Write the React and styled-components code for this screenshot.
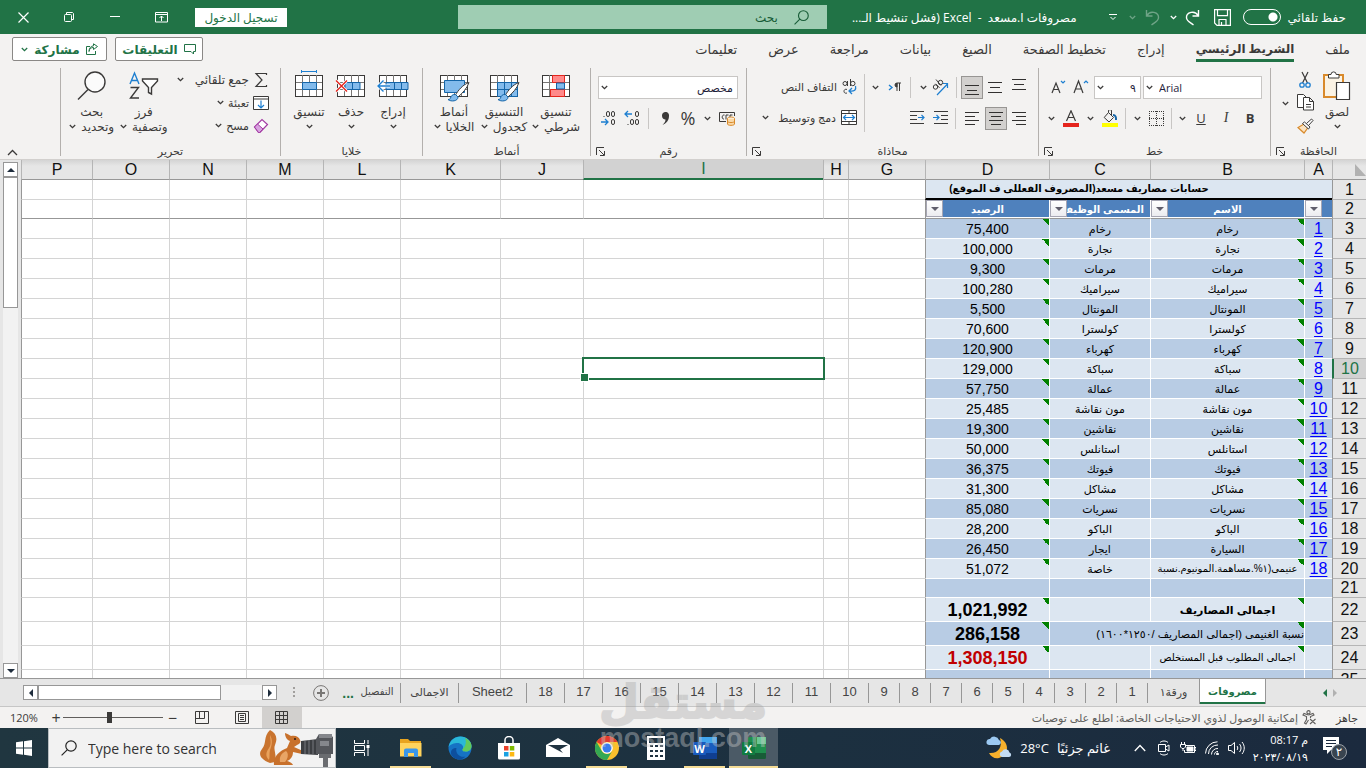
import styled, { createGlobalStyle, css } from "styled-components";

const green = "#217346";
const ink = "#3b3a39";
const blue = "#1e7fd0";
const uiFont = '"Open Sans", "Noto Sans", "DejaVu Sans", sans-serif';
const sheetFont = '"Liberation Sans", "DejaVu Sans", sans-serif';

const GlobalStyle = createGlobalStyle`
  * {
    box-sizing: border-box;
  }

  body {
    margin: 0;
    font-family: ${uiFont};
    font-size: 12px;
    color: ${ink};
  }

  button, input, select {
    font: inherit;
    color: inherit;
    margin: 0;
    padding: 0;
    border: 0;
    background: none;
  }

  svg {
    display: block;
    flex: none;
  }
`;

const Window = styled.div`
  height: 100vh;
  display: flex;
  flex-direction: column;
  overflow: hidden;
  background: #f3f2f1;
`;

/* ---------- title bar ---------- */

const TitleBar = styled.header`
  display: flex;
  align-items: center;
  height: 34px;
  flex: none;
  padding-right: 20px;
  background: ${green};
  color: #fff;
`;

const AutoSave = styled.label`
  display: flex;
  align-items: center;
  gap: 7px;
  white-space: nowrap;
  font-size: 12px;

  input {
    appearance: none;
    width: 38px;
    height: 16px;
    border: 1px solid #fff;
    border-radius: 8px;
    background: radial-gradient(circle at 29px 7px, #fff 4px, transparent 5px);
  }
`;

const TitleButton = styled.button`
  display: flex;
  align-items: center;
  justify-content: center;
  width: ${(p) => p.$w || 20}px;
  height: 30px;
  flex: none;
  opacity: ${(p) => (p.$dim ? 0.35 : 1)};
`;

const DocTitle = styled.div`
  flex: 1;
  min-width: 0;
  margin-right: 24px;
  font-size: 12px;
  white-space: pre;
  overflow: hidden;
`;

const SearchBox = styled.label`
  display: flex;
  align-items: center;
  gap: 16px;
  width: 27vw;
  height: 24px;
  padding: 0 18px;
  background: #9fcdb3;
  color: #185c37;

  input {
    flex: 1;
    min-width: 0;
    outline: 0;
  }

  input::placeholder {
    color: #185c37;
    opacity: 1;
  }
`;

const WindowControls = styled.div`
  display: flex;
  align-items: center;
  justify-content: flex-end;
  flex: none;
  width: 458px;
`;

const SignIn = styled.button`
  width: 92px;
  height: 19px;
  margin-left: 11px;
  background: #fff;
  color: ${green};
  font-size: 12px;
  line-height: 17px;
`;

/* ---------- ribbon ---------- */

const RibbonTabs = styled.nav`
  display: flex;
  align-items: center;
  height: 33px;
  flex: none;
  padding: 0 16px 3px 12px;
`;

const Tab = styled.a`
  height: 26px;
  margin-left: 31px;
  padding-top: 4px;
  line-height: 18px;
  font-size: 13px;
  white-space: nowrap;
  color: ${ink};
  text-decoration: none;

  ${(p) =>
    p.$active &&
    css`
      font-size: 12px;
      font-weight: bold;
      border-bottom: 3px solid ${green};
    `}
`;

const TabActions = styled.div`
  display: flex;
  gap: 8px;
  margin-right: auto;
`;

const OutlineButton = styled.button`
  display: flex;
  align-items: center;
  justify-content: center;
  gap: 6px;
  width: ${(p) => p.$w}px;
  height: 24px;
  border: 1px solid #8a8886;
  border-radius: 2px;
  background: #fff;
  color: ${green};
  font-size: 12px;
  font-weight: bold;
  white-space: nowrap;
`;

const Ribbon = styled.div`
  display: flex;
  height: 93px;
  flex: none;
  padding-top: 1px;
  border-bottom: 1px solid #d2d0ce;
`;

const Group = styled.section`
  display: flex;
  flex-direction: column;
  width: ${(p) => p.$w}px;
  flex: none;
  height: 88px;
  border-left: 1px solid #b3b0ad;
`;

const GroupBody = styled.div`
  display: flex;
  flex: 1;
  padding-right: ${(p) => p.$start || 0}px;
`;

const GroupFooter = styled.div`
  display: grid;
  grid-template-columns: 12px 1fr 12px;
  align-items: center;
  height: 10px;
  padding: 0 2px;
  font-size: 11px;
  line-height: 10px;
  text-align: center;
  white-space: nowrap;

  span {
    grid-column: 2;
  }
`;

const Stack = styled.div`
  display: flex;
  flex-direction: column;
  gap: ${(p) => p.$gap || 0}px;
  padding-top: ${(p) => p.$top || 0}px;
  padding-right: ${(p) => p.$start || 0}px;
`;

const ToolRow = styled.div`
  display: flex;
  align-items: center;
  height: 24px;
`;

const Tool = styled.button`
  display: flex;
  align-items: center;
  justify-content: center;
  flex: none;
  width: ${(p) => p.$w || 24}px;
  height: 23px;
  font-size: ${(p) => p.$size || 14}px;
  line-height: 20px;

  i {
    font-family: "Liberation Serif", serif;
    font-size: 14px;
  }

  ${(p) =>
    p.$on &&
    css`
      border: 1px solid #979593;
      background: #d2d0ce;
    `}
`;

const Divider = styled.span`
  width: ${(p) => p.$w || 8}px;
  height: ${(p) => p.$h || 21}px;
  flex: none;
  background: linear-gradient(#c8c6c4, #c8c6c4) center / 1px 100% no-repeat;
`;

const Combo = styled.div`
  display: flex;
  align-items: center;
  direction: ltr;
  width: ${(p) => p.$w}px;
  height: 23px;
  margin-left: 2px;
  padding-left: 2px;
  border: 1px solid #c8c6c4;
  background: #fff;

  select {
    appearance: none;
    flex: 1;
    min-width: 0;
    height: 21px;
    padding: 0 4px 0 6px;
    direction: ${(p) => p.$dir || "ltr"};
    color: #1f1e3a;
    font-size: 11px;
  }
`;

const BigTool = styled.button`
  display: flex;
  flex-direction: column;
  align-items: center;
  width: ${(p) => p.$w}px;
  flex: none;
  height: 72px;
  padding-top: 2px;
  font-size: 12px;
  line-height: 15px;
  white-space: nowrap;

  > svg {
    margin-bottom: 2px;
  }

  span {
    display: flex;
    align-items: center;
    gap: 5px;
    height: 15px;
  }
`;

const TextTool = styled.button`
  display: flex;
  align-items: center;
  gap: ${(p) => p.$gap || 5}px;
  height: 23px;
  font-size: ${(p) => p.$size || 11}px;
  white-space: nowrap;
`;

const CollapseRibbon = styled.button`
  align-self: flex-end;
  margin: 0 auto 3px 7px;
`;

/* ---------- sheet ---------- */

const SheetArea = styled.main`
  display: flex;
  flex: 1;
  min-height: 0;
  border-bottom: 1px solid #979797;
`;

const GridPane = styled.div`
  flex: 1;
  min-width: 0;
  overflow: hidden;
  background: #fff;
`;

const Grid = styled.table`
  width: 100%;
  table-layout: fixed;
  border-spacing: 0;
  font-family: ${sheetFont};
  color: #000;

  td, th {
    padding: 0;
    overflow: hidden;
    white-space: nowrap;
    text-align: center;
  }
`;

const HeadCell = styled.th`
  height: 20px;
  font-size: 16px;
  font-weight: normal;
  line-height: 18px;
  color: ${(p) => (p.$on ? green : "#111")};
  background: ${(p) =>
    p.$on ? "#d2d2d2" : "linear-gradient(#d4d4d4, #e6e6e6 6px)"};
  border-left: 1px solid #b5b5b5;
  border-bottom: ${(p) => (p.$on ? `2px solid ${green}` : "1px solid #979797")};
`;

const RowHead = styled.th`
  font-size: 16px;
  font-weight: normal;
  line-height: 18px;
  color: ${(p) => (p.$on ? green : "#111")};
  background: ${(p) => (p.$on ? "#d2d2d2" : "#e6e6e6")};
  border-left: ${(p) => (p.$on ? `2px solid ${green}` : "1px solid #979797")};
  border-bottom: 1px solid #b5b5b5;
`;

const Row = styled.tr`
  height: ${(p) => p.$h}px;

  > td {
    border-bottom: 1px solid ${(p) => (p.$freeze ? "#979797" : "#d4d4d4")};
  }
`;

const EmptyCell = styled.td`
  border-left: 1px solid ${(p) => (p.$edge ? "#979797" : "#d4d4d4")};
`;

const SelectedCell = styled(EmptyCell)`
  && {
    position: relative;
    overflow: visible;
  }

  &::before {
    content: "";
    position: absolute;
    inset: -2px;
    border: 2px solid ${green};
  }

  &::after {
    content: "";
    position: absolute;
    left: -4px;
    bottom: -4px;
    width: 7px;
    height: 7px;
    border: 1px solid #fff;
    background: ${green};
  }
`;

const flag =
  "linear-gradient(to bottom left, #008000 50%, transparent 50%) top right / 7px 7px no-repeat";

const DataCell = styled.td`
  && {
    height: ${(p) => p.$h || 20}px;
    background: ${(p) => (p.$flag ? flag + ", " : "")}
      ${(p) => (p.$dark ? "#b8cce4" : "#dce6f1")};
    border-bottom-color: #fff;
    border-left: 1px solid ${(p) => (p.$edge ? "#979797" : "#fff")};
    font-size: ${(p) => p.$size || 11}px;
    font-weight: ${(p) => (p.$bold ? "bold" : "normal")};
    line-height: 18px;
    text-align: ${(p) => p.$align || "center"};
    color: ${(p) => p.$color || "#000"};
  }

  a {
    color: #0000ff;
    text-underline-offset: 2px;
  }
`;

const SheetTitle = styled.td`
  && {
    padding-right: 100px;
    background: #dce6f1;
    border-left: 1px solid #979797;
    border-bottom: 2px solid #000;
    font-size: 10px;
    font-weight: bold;
    line-height: 16px;
  }
`;

const FilterHead = styled.td`
  && {
    position: relative;
    background: #4f81bd;
    border-left: 1px solid ${(p) => (p.$edge ? "#979797" : "#fff")};
    box-shadow: inset 0 -1px #fff;
    color: #fff;
    font-size: 10px;
    font-weight: bold;
    line-height: 17px;
  }

  button {
    position: absolute;
    left: 0;
    bottom: 1px;
    display: flex;
    align-items: center;
    justify-content: center;
    width: 17px;
    height: 17px;
    border: 1px solid #a6a6b4;
    background: linear-gradient(#fff, #ececf0);
  }
`;

const VerticalBar = styled.div`
  display: flex;
  flex-direction: column;
  width: 21px;
  flex: none;
  padding: 2px 3px 0;
  background: #e6e6e6;
`;

const ScrollButton = styled.button`
  display: flex;
  align-items: center;
  justify-content: center;
  width: 15px;
  height: 15px;
  flex: none;
  border: 1px solid #979797;
  background: #fff;
`;

const ScrollThumb = styled.div`
  width: ${(p) => p.$w || 15}px;
  height: ${(p) => p.$h || 15}px;
  border: 1px solid #979797;
  background: #fff;
`;

const ScrollTrack = styled.div`
  flex: 1;
  background: #f2f2f2;
`;

/* ---------- sheet tabs ---------- */

const SheetTabs = styled.nav`
  display: flex;
  align-items: center;
  height: 28px;
  flex: none;
  background: #e6e6e6;
  border-bottom: 1px solid #c6c6c6;
  font-family: ${sheetFont};
`;

const TabArrows = styled.div`
  display: flex;
  justify-content: space-between;
  width: 100px;
  padding: 0 27px 0 55px;
`;

const SheetTab = styled.a`
  width: ${(p) => p.$w}px;
  flex: none;
  height: 20px;
  border-left: 1px solid #979797;
  color: #444;
  font-size: ${(p) => p.$size || 13}px;
  line-height: 18px;
  text-align: center;
  text-decoration: none;
  overflow: hidden;
  white-space: nowrap;

  ${(p) =>
    p.$active &&
    css`
      height: 25px;
      align-self: flex-start;
      padding-top: 4px;
      border: solid #979797;
      border-width: 0 1px;
      box-shadow: inset 0 -2px ${green};
      background: #fff;
      color: ${green};
      font-weight: bold;
    `}

  ${(p) =>
    p.$last &&
    css`
      border-left: 0;
    `}
`;

const MoreTabs = styled.button`
  width: 10px;
  height: 20px;
  color: ${green};
  font-size: 14px;
  font-weight: bold;
  line-height: 14px;
`;

const TabsEnd = styled.div`
  display: flex;
  align-items: center;
  gap: 18px;
  margin-right: auto;
`;

const HorizontalBar = styled.div`
  display: flex;
  direction: ltr;
  width: 254px;
  margin: 0 -2px 0 23px;
`;

/* ---------- status bar ---------- */

const StatusBar = styled.footer`
  display: flex;
  align-items: center;
  height: 21px;
  flex: none;
  padding: 0 8px 0 10px;
  font-size: 11px;
  white-space: nowrap;
`;

const StatusText = styled.button`
  display: flex;
  align-items: center;
  gap: 4px;
  margin-right: 19px;
  color: #605e5c;
  font-size: 11px;
`;

const StatusTools = styled.div`
  display: flex;
  align-items: center;
  margin-right: auto;
`;

const ViewButton = styled.button`
  display: flex;
  align-items: center;
  justify-content: center;
  width: 40px;
  height: 21px;
  background: ${(p) => (p.$on ? "#d2d0ce" : "none")};
`;

const ZoomButton = styled.button`
  width: ${(p) => p.$w}px;
  font-size: 16px;
  line-height: 18px;
`;

const ZoomSlider = styled.input`
  appearance: none;
  width: 100px;
  height: 14px;
  background: linear-gradient(#605e5c, #605e5c) center / 100% 1px no-repeat;

  &::-webkit-slider-thumb {
    appearance: none;
    width: 5px;
    height: 11px;
    background: ${ink};
  }
`;

const ZoomValue = styled.span`
  width: 39px;
  text-align: left;
  direction: ltr;
  font-size: 11px;
`;

/* ---------- taskbar ---------- */

const Taskbar = styled.footer`
  display: flex;
  direction: ltr;
  height: 40px;
  flex: none;
  background: linear-gradient(90deg, #203640, #1c3040 60%, #1b2a3e);
  color: #fff;
`;

const TaskButton = styled.button`
  position: relative;
  display: flex;
  align-items: center;
  justify-content: center;
  width: ${(p) => p.$w || 49}px;
  flex: none;
  background: ${(p) => (p.$on ? "#4b5a66" : "none")};

  ${(p) =>
    p.$open &&
    css`
      &::after {
        content: "";
        position: absolute;
        bottom: 0;
        left: ${p.$on ? 0 : 4}px;
        right: ${p.$on ? 0 : 4}px;
        height: 2px;
        background: #f5dc95;
      }
    `}
`;

const TaskSearch = styled.label`
  display: flex;
  align-items: center;
  gap: 11px;
  width: 288px;
  flex: none;
  padding-left: 12px;
  border: 1px solid #b9bdc0;
  background: #f2f2f2;
  color: #222;

  input {
    flex: 1;
    min-width: 0;
    font-size: 14px;
    outline: 0;
  }

  input::placeholder {
    color: #333;
    opacity: 1;
  }
`;

const TaskButtons = styled.div`
  display: flex;
  padding-left: 1px;
`;

const Tray = styled.div`
  display: flex;
  align-items: center;
  margin-left: auto;
  padding-right: 4px;
`;

const Weather = styled.button`
  display: flex;
  align-items: center;
  gap: 8px;
  margin-right: 18px;
  font-size: 13px;
  white-space: nowrap;
`;

const Clock = styled.time`
  width: 60px;
  font-size: 11px;
  line-height: 17px;
  text-align: right;
  white-space: nowrap;
`;

const TrayButton = styled.button`
  display: flex;
  align-items: center;
  justify-content: center;
  width: ${(p) => p.$w || 24}px;
  height: 40px;
`;

const Watermark = styled.div`
  position: absolute;
  left: 50%;
  bottom: 16px;
  width: 180px;
  margin-left: -90px;
  direction: ltr;
  text-align: center;
  font-weight: bold;
  pointer-events: none;

  p {
    margin: 0 0 -6px;
    font-family: "DejaVu Sans", sans-serif;
    font-size: 46px;
    line-height: 56px;
    color: #a0a0a0;
    -webkit-text-stroke: 2px #a0a0a0;
    opacity: 0.34;
  }

  small {
    display: block;
    font-family: ${sheetFont};
    font-size: 27px;
    line-height: 28px;
    color: rgba(200, 200, 200, 0.42);
  }
`;

/* ---------- icons ---------- */

const Chevron = ({ color = ink }) => (
  <svg width="7" height="5" viewBox="0 0 7 5" fill="none" stroke={color} strokeWidth="1.3">
    <path d="M.8 1l2.7 2.6L6.2 1" />
  </svg>
);

const Magnifier = ({ size = 15 }) => (
  <svg width={size} height={size} viewBox="0 0 16 16" fill="none" stroke="currentColor" strokeWidth="1.2">
    <circle cx="10" cy="6" r="5.2" />
    <path d="M6.2 9.8L.6 15.4" />
  </svg>
);

const Launcher = () => (
  <svg width="9" height="9" viewBox="0 0 9 9" fill="none" stroke={ink}>
    <path d="M.5 8V.5H8M3 3l5 5M8.5 4v4.5H4" />
  </svg>
);

const Triangle = ({ dir, color = "#1f2d3d" }) => {
  const paths = {
    up: "M0 6l4-4 4 4z",
    down: "M0 2h8L4 6z",
    left: "M6 0v8L2 4z",
    right: "M2 0v8l4-4z",
  };
  return (
    <svg width="8" height="8" viewBox="0 0 8 8" fill={color}>
      <path d={paths[dir]} />
    </svg>
  );
};

const Lines = ({ rows }) => (
  <svg width="16" height="18" viewBox="0 0 16 18" stroke="#323130">
    {rows.map(([x1, x2, y]) => (
      <path key={y} d={`M${x1} ${y + 0.5}H${x2}`} />
    ))}
  </svg>
);

const GridIcon = ({ children }) => (
  <svg width="32" height="32" viewBox="0 0 32 32" fill="none" stroke={ink}>
    <rect x="2.5" y="5.5" width="27" height="21" fill="#fff" />
    <path d="M9.5 5v21M16.5 5v21M23.5 5v21M3 12.5h26M3 19.5h26" stroke="#797775" />
    {children}
  </svg>
);

const Brush = () => (
  <g strokeLinejoin="round">
    <path d="M31 12.5c-6 2-11 8-13.500 12.500l2.500 2c4.500-4 9-8.500 11-14.500z" fill="#fff" />
    <path d="M17.500 24.500c-3-.5-4.500 1.500-5 3.500-.3 1-1 1.500-2.500 1.500 3 2.500 10 1.800 10-2.500z" fill="#83bbec" stroke="#1465a8" />
  </g>
);

const PasteIcon = () => (
  <svg width="30" height="32" viewBox="0 0 30 32" fill="none">
    <path d="M2 5h19v22H2z" fill="#fbf3e4" stroke="#d98a2b" strokeWidth="2" />
    <path d="M6.5 8V4.500H9a2.600 2.600 0 0 1 5.200 0h2.800V8z" fill="#fff" stroke={ink} />
    <path d="M14.500 12.500h13v17h-13z" fill="#fff" stroke={ink} strokeWidth="1.2" />
  </svg>
);

const CutIcon = () => (
  <svg width="14" height="18" viewBox="0 0 14 18" fill="none">
    <path d="M4 1l5.500 11M10 1L4.500 12" stroke={ink} strokeWidth="1.2" />
    <circle cx="4" cy="14" r="2.2" stroke={blue} strokeWidth="1.3" />
    <circle cx="10" cy="14" r="2.2" stroke={blue} strokeWidth="1.3" />
  </svg>
);

const CopyIcon = () => (
  <svg width="17" height="17" viewBox="0 0 17 17" fill="#fff" stroke={ink}>
    <path d="M7 13.500H.5V.5h6l3 3" />
    <path d="M6.500 3.500h6l4 4v8.500h-10zM12.500 3.500v4h4M9 10.500h5M9 13h5" />
  </svg>
);

const PainterIcon = () => (
  <svg width="17" height="16" viewBox="0 0 17 16" fill="none">
    <path d="M7 6L1 9.500l6 5.500 4-5.500z" fill="#fbe3c0" stroke="#d98a2b" strokeWidth="1.2" />
    <path d="M5.500 5.500l2-1.500 5.500 5-1.500 2zM9.500 5.500L14.500 1l1.500 1.500-4.500 5" fill="#fff" stroke={ink} />
  </svg>
);

const BordersIcon = () => (
  <svg width="15" height="15" viewBox="0 0 15 15" fill="none" stroke={ink} strokeDasharray="1 1">
    <path d="M0 .5h15M0 7.500h15M0 14.500h15M.5 0v15M7.500 0v15M14.500 0v15" />
  </svg>
);

const FillIcon = () => (
  <svg width="16" height="17" viewBox="0 0 16 17" fill="none">
    <path d="M6.500 2.500l5 5-4.500 4.500-4.800-4.500zM6.500 2.500V1a1.500 1.500 0 0 1 3 0v4" stroke={ink} />
    <path d="M11 5c2.500 0 3.200 2 3 5" stroke="#1465a8" strokeWidth="2" />
    <path d="M0 13h16v4H0z" fill="#ffff00" />
  </svg>
);

const FontColorIcon = () => (
  <svg width="16" height="17" viewBox="0 0 16 17" fill="none">
    <path d="M3.500 11L8 .8 12.500 11M5 7.500h6" stroke={ink} strokeWidth="1.2" />
    <path d="M0 13h16v4H0z" fill="#e5251d" />
  </svg>
);

const GrowFont = ({ small }) => (
  <svg width="16" height="16" viewBox="0 0 16 16" fill="none">
    <path d={small ? "M1 14L5 4l4 10M2.500 10.500h5" : "M1 14L5.500 2l4.500 12M2.500 10h6"} stroke={ink} strokeWidth="1.2" />
    <path d={small ? "M10 2l2 2 2-2" : "M11 4l2-2 2 2"} stroke={blue} strokeWidth="1.2" />
  </svg>
);

const OrientationIcon = () => (
  <svg width="18" height="18" viewBox="0 0 18 18" fill="none">
    <g stroke={ink}>
      <circle cx="4.500" cy="9" r="2.2" />
      <path d="M4.500 5.800l4 4" />
      <path d="M5 1.500l5 6" />
      <circle cx="9.500" cy="4.500" r="2.2" />
    </g>
    <path d="M6 17L16.500 6M12 5.500h4.500V10" stroke={blue} strokeWidth="1.2" />
  </svg>
);

const ParagraphIcon = () => (
  <svg width="13" height="11" viewBox="0 0 13 11" fill="none">
    <path d="M1 3l3 2.500L1 8" stroke={blue} strokeWidth="1.4" />
    <path d="M9 9V1h4M11.500 1v8" stroke={ink} />
    <path d="M9 1a2 2 0 0 0 0 4z" fill={ink} stroke={ink} />
  </svg>
);

const IndentIcon = ({ flip }) => (
  <svg width="15" height="14" viewBox="0 0 15 14" fill="none">
    <path d={flip ? "M0 .5h14M0 4.500h7M0 8.500h7M0 12.500h14" : "M1 .5h14M8 4.500h7M8 8.500h7M1 12.500h14"} stroke={ink} />
    <path d={flip ? "M8 6.500h6M11.500 4L14 6.500 11.500 9" : "M0 6.500h6M3.500 4L6 6.500 3.500 9"} stroke={blue} strokeWidth="1.2" />
  </svg>
);

const WrapIcon = () => (
  <svg width="15" height="17" viewBox="0 0 15 17" fill="none">
    <g stroke={ink}>
      <circle cx="3" cy="5.500" r="2" />
      <path d="M5.500 3v5M8.500 1v7" />
      <circle cx="10.800" cy="5.500" r="2.2" />
      <path d="M5 11.500c-4-1.500-4 5 0 3.500" />
    </g>
    <path d="M13.500 8c1 4-1 5.500-6 5M10 10l-3 3 3 3" stroke={blue} strokeWidth="1.3" />
  </svg>
);

const MergeIcon = () => (
  <svg width="16" height="15" viewBox="0 0 16 15" fill="none">
    <path d="M.5.5h15v14H.5zM8 .5v3M8 11.500v3M.5 3.500h15M.5 11.500h15" fill="#fff" stroke={ink} />
    <path d="M2.500 7.500h11M5 5L2.500 7.500 5 10M11 5l2.500 2.500L11 10" stroke={blue} strokeWidth="1.2" />
  </svg>
);

const CurrencyIcon = () => (
  <svg width="17" height="15" viewBox="0 0 17 15" fill="none">
    <path d="M7 10.500H.5V1.500h15V5M5.500 4c-3-.5-3 4.500-.5 4M7 8.500V4h2.500M11 6V4h2.500" stroke={ink} />
    <ellipse cx="12" cy="7.500" rx="3.5" ry="1.5" fill="#fff" stroke="#d98a2b" />
    <path d="M8.500 7.500v5.500c0 1.800 7 1.800 7 0V7.500M8.500 10.300c0 1.700 7 1.700 7 0" fill="#f9d9a8" stroke="#d98a2b" />
  </svg>
);

const Zero = ({ x, y }) => <rect x={x} y={y} width="3" height="5" rx="1.5" stroke={ink} fill="none" />;

const DecimalIcon = ({ less }) => (
  <svg width="17" height="17" viewBox="0 0 17 17" fill="none">
    {less ? (
      <>
        <path d="M1 4h7M4 1L1 4l3 3" stroke={blue} strokeWidth="1.3" />
        <Zero x="11.5" y="1.5" />
        <Zero x="6.5" y="9.5" />
        <Zero x="11.5" y="9.5" />
        <path d="M3.500 14h1v1h-1z" fill={ink} />
      </>
    ) : (
      <>
        <Zero x="6.5" y="1.5" />
        <Zero x="11.5" y="1.5" />
        <path d="M3.500 6h1v1h-1z" fill={ink} />
        <path d="M1 12h7M5 9l3 3-3 3" stroke={blue} strokeWidth="1.3" />
        <Zero x="11.5" y="9.5" />
      </>
    )}
  </svg>
);

const SumIcon = () => (
  <svg width="16" height="16" viewBox="0 0 16 16" fill="none" stroke={ink} strokeWidth="1.2">
    <path d="M13.500 3V1.500H3L9 8l-6 6.500h10.500V13" />
  </svg>
);

const FillDownIcon = () => (
  <svg width="16" height="14" viewBox="0 0 16 14" fill="none">
    <path d="M.5.5h15v13H.5zM.5 3h15" fill="#fff" stroke={ink} />
    <path d="M8 4.500V12M5 9l3 3 3-3" stroke={blue} strokeWidth="1.2" />
  </svg>
);

const EraserIcon = () => (
  <svg width="16" height="16" viewBox="0 0 16 16">
    <path d="M1.500 9L9 1.500l5.500 5L7 14.500H5.500z" fill="#fff" stroke="#a33ba3" strokeWidth="1.2" />
    <path d="M1.500 9l3-3 5.500 5-3.500 3.500h-1z" fill="#d8a3e0" stroke="#a33ba3" />
  </svg>
);

const SortIcon = () => (
  <svg width="30" height="32" viewBox="0 0 30 32" fill="none" strokeWidth="1.4">
    <path d="M1 14L5.500 3 10 14M2.500 10.500h6" stroke={blue} />
    <path d="M1.500 17.500h8l-8 10.500h8.500" stroke={ink} />
    <path d="M13.500 9h15v2l-6 6.500v6.500l-3-1.500v-5l-6-6.500z" fill="#fff" stroke={ink} />
  </svg>
);

const FindIcon = () => (
  <svg width="32" height="32" viewBox="0 0 32 32" fill="#fbfbfb" stroke={ink} strokeWidth="1.4">
    <circle cx="19" cy="12" r="10" />
    <path d="M12 19.500L2 29.500" />
  </svg>
);

const StoreIcon = () => (
  <svg width="24" height="24" viewBox="0 0 24 24">
    <path d="M8 7V4a4 3.500 0 0 1 8 0v3" fill="none" stroke="#fff" strokeWidth="1.5" />
    <path d="M1 7h22v15a1.500 1.500 0 0 1-1.500 1.500h-19A1.500 1.500 0 0 1 1 22z" fill="#fff" />
    <path d="M7 10h4.500v4.500H7z" fill="#e8402a" />
    <path d="M12.800 10h4.500v4.500h-4.500z" fill="#7fba00" />
    <path d="M7 16h4.500v4.500H7z" fill="#1ba1e2" />
    <path d="M12.800 16h4.500v4.500h-4.500z" fill="#fdb813" />
  </svg>
);

const ChromeIcon = () => (
  <svg width="24" height="24" viewBox="0 0 24 24">
    <circle cx="12" cy="12" r="12" fill="#fbc02d" />
    <path d="M1.600 6A12 12 0 0 1 22.400 6H12a6 6 0 0 0-5.200 3z" fill="#e33b2e" />
    <path d="M1.600 6A12 12 0 0 0 12 24l5.200-9a6 6 0 0 1-10.400 0z" fill="#34a853" />
    <circle cx="12" cy="12" r="5.8" fill="#fff" />
    <circle cx="12" cy="12" r="4.5" fill="#3b7ded" />
  </svg>
);

const EdgeIcon = () => (
  <svg width="24" height="24" viewBox="0 0 24 24">
    <circle cx="12" cy="12" r="11.5" fill="#1673c4" />
    <path d="M.6 11C2 4 7 .5 12.500.5 19 .5 23.500 5.500 23.500 10c0 3-2 5.500-5.500 5.500-2.500 0-4.500-.8-3-3C16 9 12 6.500 8.500 7 4.500 7.500 1.500 9 .6 11z" fill="#2ab8d8" />
    <path d="M17 2c4.500 2 6.500 5 6.500 8 0 3-2 5.500-5.500 5.500-2.500 0-4.500-.8-3-3C18 10 18.500 5 17 2z" fill="#63c95c" />
    <path d="M8.500 12c-1.500 5 3 10 9 8.500-3 3.500-9 4-12.500.5-4-4-2-9 3.500-9z" fill="#0d4f9e" />
  </svg>
);

const OfficeIcon = ({ word }) => (
  <svg width="26" height="24" viewBox="0 0 26 24">
    <rect x="7" y="1" width="18" height="22" rx="1.5" fill={word ? "#1a5dbe" : "#1f8f4e"} />
    <path d={word ? "M7 1h18v6H7z" : "M16 1h9v7h-9z"} fill={word ? "#41a5ee" : "#6bc794"} />
    <path d="M7 17h18v4.500a1.500 1.500 0 0 1-1.500 1.500h-15A1.500 1.500 0 0 1 7 21.500z" fill={word ? "#103f91" : "#185c37"} />
    <rect x="1" y="6" width="13" height="13" rx="1" fill={word ? "#185abd" : "#107c41"} />
    <text x="7.5" y="16.5" textAnchor="middle" fontSize="11" fontWeight="bold" fill="#fff" fontFamily="Open Sans, sans-serif">
      {word ? "W" : "X"}
    </text>
  </svg>
);

const ExplorerIcon = () => (
  <svg width="22" height="20" viewBox="0 0 22 20">
    <path d="M0 1h8l2 2h11v4H0z" fill="#e8a41f" />
    <path d="M0 5h21.500v13.500H0z" fill="#ffd35c" />
    <path d="M4 19v-6.500a2 2 0 0 1 2-2h10a2 2 0 0 1 2 2V19h-4v-4H8v4z" fill="#3a96e8" />
  </svg>
);

const CalculatorIcon = () => (
  <svg width="18" height="24" viewBox="0 0 18 24">
    <path d="M0 0h18v24H0z" fill="#fff" />
    <path d="M2 2h14v5H2z" fill="#203341" />
    {[10, 15, 20].map((y) =>
      [3, 8, 13].map((x) => <rect key={`${x}-${y}`} x={x} y={y - 1} width="3" height="2" fill="#203341" />)
    )}
  </svg>
);

const SquirrelIcon = () => (
  <svg width="76" height="38" viewBox="0 0 76 38">
    <path d="M11 34C1 30-1 25 3 20 8 14 4 8 11 1c6 3 8 8 5 15-2 5 2 9 0 17z" fill="#c9742f" />
    <path d="M10 31c-4-4-3-8 0-12s1-9 1-13c3 5 2 10 0 15-1 4 0 7-1 10z" fill="#e9a25c" />
    <path d="M15 36c-1-8 5-14 13-17l3-7c-3-1-5-4-5-8 3 1 4 2 6 3 5-1 8 1 9 4 1 2 0 4-3 5l-3 2 9 4-1 3-9-2c0 5-3 8-6 9 3 1 5 2 6 4z" fill="#c8712c" />
    <path d="M21 33c-1-6 2-9 6-11 3 2 2 8-1 11z" fill="#e8a566" />
    <circle cx="36" cy="10" r="1" fill="#2b1a10" />
    <path d="M42 12l17-2v16l-17-1z" fill="#3c3e42" />
    <path d="M46 12v13M50 11v14M54 11v14" stroke="#77797e" />
    <path d="M57 10l3-5h10l4 3v17H57z" fill="#55575c" />
    <path d="M60 5h13v4H60zM61 12h9v5h-9z" fill="#85878c" />
    <path d="M60 25h12v4H60zM64 29h5v9h-5z" fill="#6a6c70" />
  </svg>
);

const WeatherIcon = () => (
  <svg width="26" height="24" viewBox="0 0 26 24">
    <path d="M14 2c10 5 9 17-1 20-4 1-8-1-10-5 9 1 14-6 11-15z" fill="#f6b02c" />
    <path d="M3 9a3 3 0 0 1 1-6 5 5 0 0 1 9 1 2.600 2.600 0 0 1 0 5z" fill="#9cc9f2" />
    <path d="M16 21a2.800 2.800 0 0 1 0-5.500 4 4 0 0 1 7.500 1 2.300 2.300 0 0 1-.5 4.500z" fill="#c3dcf5" />
  </svg>
);

/* ---------- data ---------- */

const ribbonTabs = ["إدراج", "تخطيط الصفحة", "الصيغ", "بيانات", "مراجعة", "عرض", "تعليمات"];

const columns = [
  ["A", 28],
  ["B", 154],
  ["C", 101],
  ["D", 124],
  ["G", 77],
  ["H", 25],
  ["I", 240],
  ["J", 83],
  ["K", 100],
  ["L", 77],
  ["M", 77],
  ["N", 77],
  ["O", 77],
  ["P"],
];

const emptyColumns = columns.slice(4).map(([name]) => name);

const expenses = [
  ["رخام", "رخام", "75,400"],
  ["نجارة", "نجارة", "100,000"],
  ["مرمات", "مرمات", "9,300"],
  ["سيراميك", "سيراميك", "100,280"],
  ["المونتال", "المونتال", "5,500"],
  ["كولسترا", "كولسترا", "70,600"],
  ["كهرباء", "كهرباء", "120,900"],
  ["سباكة", "سباكة", "129,000"],
  ["عمالة", "عمالة", "57,750"],
  ["مون نقاشة", "مون نقاشة", "25,485"],
  ["نقاشين", "نقاشين", "19,300"],
  ["استانلس", "استانلس", "50,000"],
  ["فيوتك", "فيوتك", "36,375"],
  ["مشاكل", "مشاكل", "31,300"],
  ["نسريات", "نسريات", "85,080"],
  ["الباكو", "الباكو", "28,200"],
  ["السيارة", "ايجار", "26,450"],
  ["عنيمى(١%.مساهمة.المونيوم.نسبة", "خاصة", "51,072"],
];

const sheetTabs = [
  ...[1, 2, 3, 4, 5, 6, 7, 8, 9].map((n) => [n, 31]),
  ...[10, 11, 12, 13, 14, 15, 16, 17, 18].map((n) => [n, 38]),
  ["Sheet2", 68],
];

/* ---------- parts ---------- */

const RibbonGroup = ({ name, width, start, launcher, children }) => (
  <Group $w={width} aria-label={name}>
    <GroupBody $start={start}>{children}</GroupBody>
    <GroupFooter>
      <span>{name}</span>
      {launcher && <Launcher />}
    </GroupFooter>
  </Group>
);

const DropTool = ({ w, label }) => (
  <Tool $w={w} aria-label={label}>
    <Chevron />
  </Tool>
);

const Big = ({ width, icon, first, second }) => (
  <BigTool $w={width}>
    {icon}
    <span>{first}</span>
    <span>
      {second}
      <Chevron />
    </span>
  </BigTool>
);

const EmptyCells = ({ row }) =>
  emptyColumns.map((name) => {
    // K3:H3 is one merged cell
    if (row === 3 && ["I", "J", "K"].includes(name)) return null;
    if (row === 3 && name === "H") return <EmptyCell key={name} colSpan={4} />;
    if (row === 10 && name === "I") return <SelectedCell key={name} />;
    return <EmptyCell key={name} $edge={name === "P"} />;
  });

const Title = () => (
  <TitleBar>
    <AutoSave>
      حفظ تلقائي
      <input type="checkbox" />
    </AutoSave>
    <TitleButton $w={40} aria-label="حفظ">
      <svg width="17" height="17" viewBox="0 0 17 17" fill="none" stroke="#fff" strokeWidth="1.2">
        <path d="M.6.6h15.800v15.800H3L.6 14zM3.500.6v6h10v-6M5 16v-5.500h7V16M7.500 13v3" />
      </svg>
    </TitleButton>
    <TitleButton aria-label="إعادة">
      <svg width="15" height="17" viewBox="0 0 15 17" fill="none" stroke="#fff" strokeWidth="1.4">
        <path d="M13.500 1v6h-6M13 6.500C10 1 1 3 1.500 9c.3 3 3 4 7 7" />
      </svg>
    </TitleButton>
    <TitleButton $w={18} aria-label="خيارات الإعادة">
      <Chevron color="#fff" />
    </TitleButton>
    <TitleButton $w={24} $dim aria-label="تراجع">
      <svg width="15" height="17" viewBox="0 0 15 17" fill="none" stroke="#fff" strokeWidth="1.4">
        <path d="M1.500 1v6h6M2 6.500C5 1 14 3 13.500 9c-.3 3-3 4-7 7" />
      </svg>
    </TitleButton>
    <TitleButton $w={16} $dim aria-label="خيارات التراجع">
      <Chevron color="#fff" />
    </TitleButton>
    <TitleButton $w={24} aria-label="تخصيص">
      <svg width="8" height="8" viewBox="0 0 8 8" fill="none" stroke="#fff">
        <path d="M0 1.500h8M1.500 4L4 6.500 6.500 4" />
      </svg>
    </TitleButton>
    <DocTitle>مصروفات ا.مسعد {" - "} Excel (فشل تنشيط الـ...</DocTitle>
    <SearchBox>
      <Magnifier />
      <input type="search" placeholder="بحث" aria-label="بحث" />
    </SearchBox>
    <WindowControls>
      <SignIn>تسجيل الدخول</SignIn>
      <TitleButton $w={46} aria-label="خيارات عرض الشريط">
        <svg width="13" height="11" viewBox="0 0 13 11" fill="none" stroke="#fff">
          <path d="M.5.5h12v9.500H.5zM.5 2.500h12M6.500 9V4M4.500 6l2-2 2 2" />
        </svg>
      </TitleButton>
      <TitleButton $w={46} aria-label="تصغير">
        <svg width="10" height="2" stroke="#fff">
          <path d="M0 .5h10" />
        </svg>
      </TitleButton>
      <TitleButton $w={46} aria-label="استعادة">
        <svg width="10" height="10" viewBox="0 0 10 10" fill="none" stroke="#fff">
          <rect x=".5" y="2.5" width="7" height="7" rx="1" />
          <path d="M2.500 2.500v-2h6l1 1v6h-2" />
        </svg>
      </TitleButton>
      <TitleButton $w={46} aria-label="إغلاق">
        <svg width="11" height="11" viewBox="0 0 11 11" stroke="#fff" strokeWidth="1.2">
          <path d="M.5.5l10 10M10.500.5l-10 10" />
        </svg>
      </TitleButton>
    </WindowControls>
  </TitleBar>
);

const Tabs = () => (
  <RibbonTabs>
    <Tab href="#">ملف</Tab>
    <Tab href="#" $active>
      الشريط الرئيسي
    </Tab>
    {ribbonTabs.map((name) => (
      <Tab key={name} href="#">
        {name}
      </Tab>
    ))}
    <TabActions>
      <OutlineButton $w={88}>
        <svg width="12" height="11" viewBox="0 0 12 11" fill="none" stroke={green}>
          <path d="M.5.5h11v7h-2V10L7 7.500H.5z" />
        </svg>
        التعليقات
      </OutlineButton>
      <OutlineButton $w={95}>
        <svg width="12" height="12" viewBox="0 0 12 12" fill="none" stroke={green}>
          <path d="M4 3.500H.5v8h9V8M3 8.500c.5-3 2-4 4.500-4V6.500L11.500 3.500 7.500.8v2C5 3 3 5 3 8.500z" />
        </svg>
        مشاركة
        <Chevron color={green} />
      </OutlineButton>
    </TabActions>
  </RibbonTabs>
);

const HomeRibbon = () => (
  <Ribbon>
    <RibbonGroup name="الحافظة" width={96} start={10} launcher>
      <Big width={38} icon={<PasteIcon />} first="لصق" />
      <Stack>
        <Tool $w={26} aria-label="قص">
          <CutIcon />
        </Tool>
        <Tool $w={26} aria-label="نسخ">
          <CopyIcon />
        </Tool>
        <Tool $w={26} aria-label="نسخ التنسيق">
          <PainterIcon />
        </Tool>
      </Stack>
      <Stack $top={24}>
        <DropTool w={14} label="خيارات النسخ" />
      </Stack>
    </RibbonGroup>

    <RibbonGroup name="خط" width={232} start={8} launcher>
      <Stack $top={7} $gap={7}>
        <ToolRow>
          <Combo $w={119}>
            <Chevron />
            <select aria-label="الخط">
              <option>Arial</option>
            </select>
          </Combo>
          <Combo $w={47} $dir="rtl">
            <Chevron />
            <select aria-label="حجم الخط">
              <option>٩</option>
            </select>
          </Combo>
          <Tool $w={22} aria-label="تكبير الخط">
            <GrowFont />
          </Tool>
          <Tool $w={22} aria-label="تصغير الخط">
            <GrowFont small />
          </Tool>
        </ToolRow>
        <ToolRow>
          <Tool $w={24} $size={13}>
            <b>B</b>
          </Tool>
          <Tool $w={24} $size={13}>
            <i>I</i>
          </Tool>
          <Tool $w={26} $size={13}>
            <u>U</u>
          </Tool>
          <DropTool w={11} label="تسطير" />
          <Divider $w={12} />
          <Tool $w={18} aria-label="حدود">
            <BordersIcon />
          </Tool>
          <DropTool w={20} label="خيارات الحدود" />
          <Divider $w={4} />
          <Tool $w={26} aria-label="لون التعبئة">
            <FillIcon />
          </Tool>
          <DropTool w={14} label="ألوان التعبئة" />
          <Tool $w={24} aria-label="لون الخط">
            <FontColorIcon />
          </Tool>
          <DropTool w={16} label="ألوان الخط" />
        </ToolRow>
      </Stack>
    </RibbonGroup>

    <RibbonGroup name="محاذاة" width={292} start={7} launcher>
      <Stack $top={7} $gap={7}>
        <ToolRow>
          <Tool aria-label="محاذاة للأعلى">
            <Lines rows={[[1, 15, 1], [3, 13, 6], [1, 15, 11]]} />
          </Tool>
          <Tool aria-label="محاذاة للوسط">
            <Lines rows={[[1, 15, 4], [3, 13, 9], [1, 15, 14]]} />
          </Tool>
          <Tool $on $w={22} aria-label="محاذاة للأسفل">
            <Lines rows={[[1, 15, 7], [3, 13, 12], [1, 15, 16]]} />
          </Tool>
          <Divider $w={10} />
          <Tool $w={22} aria-label="الاتجاه">
            <OrientationIcon />
          </Tool>
          <DropTool w={12} label="خيارات الاتجاه" />
          <Divider $w={14} />
          <Tool $w={17} aria-label="اتجاه النص">
            <ParagraphIcon />
          </Tool>
          <DropTool w={21} label="خيارات اتجاه النص" />
        </ToolRow>
        <ToolRow>
          <Tool aria-label="محاذاة لليمين">
            <Lines rows={[[1, 15, 3], [5, 15, 7], [1, 15, 11], [5, 15, 15]]} />
          </Tool>
          <Tool $on $w={22} aria-label="توسيط">
            <Lines rows={[[1, 15, 3], [3, 13, 7], [1, 15, 11], [3, 13, 15]]} />
          </Tool>
          <Tool $w={26} aria-label="محاذاة لليسار">
            <Lines rows={[[1, 15, 3], [1, 11, 7], [1, 15, 11], [1, 11, 15]]} />
          </Tool>
          <Divider />
          <Tool $w={22} aria-label="إنقاص المسافة البادئة">
            <IndentIcon />
          </Tool>
          <Tool $w={24} aria-label="زيادة المسافة البادئة">
            <IndentIcon flip />
          </Tool>
        </ToolRow>
      </Stack>
      <Stack $top={6}>
        <Divider $w={2} $h={58} />
      </Stack>
      <Stack $top={7} $gap={8} $start={6}>
        <TextTool>
          <WrapIcon />
          التفاف النص
        </TextTool>
        <TextTool>
          <MergeIcon />
          دمج وتوسيط
          <Tool as="span" $w={16}>
            <Chevron />
          </Tool>
        </TextTool>
      </Stack>
    </RibbonGroup>

    <RibbonGroup name="رقم" width={156} start={8} launcher>
      <Stack $top={7} $gap={7}>
        <ToolRow>
          <Combo $w={140} $dir="rtl">
            <Chevron />
            <select aria-label="تنسيق الأرقام">
              <option>مخصص</option>
            </select>
          </Combo>
        </ToolRow>
        <ToolRow>
          <Tool $w={22} aria-label="تنسيق أرقام المحاسبة">
            <CurrencyIcon />
          </Tool>
          <DropTool w={18} label="العملات" />
          <Tool $w={20} $size={18}>
            %
          </Tool>
          <Tool $w={26} aria-label="نمط الفاصلة">
            <svg width="9" height="13" viewBox="0 0 9 13" fill={ink}>
              <path d="M4 0a3.500 3.500 0 0 1 4 4c0 4-2.500 7.500-6.500 9 2-2 3-3.500 3-5.500A3.800 3.800 0 0 1 4 0z" />
            </svg>
          </Tool>
          <Divider />
          <Tool aria-label="زيادة المنازل العشرية">
            <DecimalIcon less />
          </Tool>
          <Tool aria-label="إنقاص المنازل العشرية">
            <DecimalIcon />
          </Tool>
        </ToolRow>
      </Stack>
    </RibbonGroup>

    <RibbonGroup name="أنماط" width={168} start={8}>
      <Big
        width={52}
        first="تنسيق"
        second="شرطي"
        icon={
          <GridIcon>
            <path d="M12.500 5.500h12v7h-12zM10.500 19.500h14v7h-14z" fill="#ff8a8a" stroke="#e5251d" />
            <path d="M16.500 13h8v6h-8z" fill="#83bbec" stroke="#1465a8" />
          </GridIcon>
        }
      />
      <Big
        width={52}
        first="التنسيق"
        second="كجدول"
        icon={
          <GridIcon>
            <path d="M9.500 12.500h20v14h-20z" fill="#83bbec" stroke="#1465a8" />
            <path d="M16.500 12v15M23.500 12v15M9 19.500h20" stroke="#1465a8" />
            <Brush />
          </GridIcon>
        }
      />
      <Big
        width={48}
        first="أنماط"
        second="الخلايا"
        icon={
          <GridIcon>
            <path d="M6.500 10.500h20v12h-20z" fill="#83bbec" stroke="#1465a8" />
            <Brush />
          </GridIcon>
        }
      />
    </RibbonGroup>

    <RibbonGroup name="خلايا" width={142} start={8}>
      <Big
        width={42}
        first="إدراج"
        icon={
          <GridIcon>
            <path d="M9 12.500h22v7H9z" fill="#83bbec" stroke="#1465a8" />
            <path d="M17.500 13v6M24.500 13v6" stroke="#1465a8" />
            <path d="M1 16h12M6.500 10.500L1 16l5.500 5.500" stroke="#fff" strokeWidth="3" />
            <path d="M1 16h12M6.500 10.500L1 16l5.500 5.500" stroke={blue} strokeWidth="1.4" />
          </GridIcon>
        }
      />
      <Big
        width={42}
        first="حذف"
        icon={
          <GridIcon>
            <path d="M10 12.500h15v7H10z" fill="#83bbec" stroke="#1465a8" />
            <path d="M17.500 13v6" stroke="#1465a8" />
            <path d="M1 10.500l11 11M12 10.500l-11 11" stroke="#fff" strokeWidth="3" />
            <path d="M1 10.500l11 11M12 10.500l-11 11" stroke="#e5251d" strokeWidth="1.4" />
          </GridIcon>
        }
      />
      <Big
        width={42}
        first="تنسيق"
        icon={
          <GridIcon>
            <path d="M9.500 12.500h14v7h-14z" fill="#83bbec" stroke="#1465a8" />
            <path d="M8 1.500h16M8.500 0v3M23.500 0v3" stroke={blue} />
          </GridIcon>
        }
      />
    </RibbonGroup>

    <RibbonGroup name="تحرير" width={220} start={11}>
      <Stack>
        <TextTool $gap={4} $size={12}>
          <SumIcon />
          جمع تلقائي
          <Tool as="span" $w={20}>
            <Chevron />
          </Tool>
        </TextTool>
        <TextTool $gap={4}>
          <FillDownIcon />
          تعبئة
          <Chevron />
        </TextTool>
        <TextTool $gap={4}>
          <EraserIcon />
          مسح
          <Chevron />
        </TextTool>
      </Stack>
      <Big width={54} icon={<SortIcon />} first="فرز" second="وتصفية" />
      <Big width={50} icon={<FindIcon />} first="بحث" second="وتحديد" />
    </RibbonGroup>
    <CollapseRibbon aria-label="طي الشريط">
      <svg width="11" height="7" viewBox="0 0 11 7" fill="none" stroke={ink} strokeWidth="1.3">
        <path d="M1 6l4.500-4.500L10 6" />
      </svg>
    </CollapseRibbon>
  </Ribbon>
);

const Sheet = () => (
  <SheetArea>
    <GridPane>
      <Grid>
        <colgroup>
          <col width="34" />
          {columns.map(([name, width]) => (
            <col key={name} width={width} />
          ))}
        </colgroup>
        <thead>
          <tr>
            <HeadCell aria-label="تحديد الكل">
              <svg width="13" height="12" viewBox="0 0 13 12" fill="#b1b1b1">
                <path d="M2 0v12h11z" />
              </svg>
            </HeadCell>
            {columns.map(([name]) => (
              <HeadCell key={name} $on={name === "I"}>
                {name}
              </HeadCell>
            ))}
          </tr>
        </thead>
        <tbody>
          <Row $h={20}>
            <RowHead>1</RowHead>
            <SheetTitle colSpan={4}>حسابات مصاريف مسعد(المصروف الفعللى ف الموقع)</SheetTitle>
            <EmptyCells />
          </Row>
          <Row $h={19} $freeze>
            <RowHead>2</RowHead>
            {["", "الاسم", "المسمى الوظيفى", "الرصيد"].map((name, i) => (
              <FilterHead key={i} $edge={i === 3}>
                {name}
                <button aria-label={`تصفية ${name}`}>
                  <Triangle dir="down" color="#605e6c" />
                </button>
              </FilterHead>
            ))}
            <EmptyCells />
          </Row>
          {expenses.map(([name, job, amount], i) => (
            <Row key={name} $h={20}>
              <RowHead $on={i === 7}>{i + 3}</RowHead>
              <DataCell $dark={i % 2 === 0} $size={16}>
                <a href="#">{i + 1}</a>
              </DataCell>
              <DataCell $dark={i % 2 === 0} $flag $size={name.length > 20 ? 10 : 11}>
                {name}
              </DataCell>
              <DataCell $dark={i % 2 === 0}>{job}</DataCell>
              <DataCell $dark={i % 2 === 0} $flag $edge $size={14}>
                {amount}
              </DataCell>
              <EmptyCells row={i + 3} />
            </Row>
          ))}
          <Row $h={19}>
            <RowHead>21</RowHead>
            <DataCell $dark $h={19} />
            <DataCell $dark $h={19} />
            <DataCell $dark $h={19} />
            <DataCell $dark $h={19} $edge />
            <EmptyCells />
          </Row>
          <Row $h={24}>
            <RowHead>22</RowHead>
            <DataCell />
            <DataCell $flag $bold $size={11}>
              اجمالى المصاريف
            </DataCell>
            <DataCell />
            <DataCell $flag $edge $bold $size={18}>
              1,021,992
            </DataCell>
            <EmptyCells />
          </Row>
          <Row $h={24}>
            <RowHead>23</RowHead>
            <DataCell $dark />
            <DataCell $dark $flag colSpan={2} $align="right">
              نسبة الغنيمى (اجمالى المصاريف /١٢٥٠*١٦٠٠)
            </DataCell>
            <DataCell $dark $flag $edge $bold $size={18}>
              286,158
            </DataCell>
            <EmptyCells />
          </Row>
          <Row $h={24}>
            <RowHead>24</RowHead>
            <DataCell />
            <DataCell $flag $size={10}>
              اجمالى المطلوب قبل المستخلص
            </DataCell>
            <DataCell />
            <DataCell $flag $edge $bold $size={18} $color="#c00000">
              1,308,150
            </DataCell>
            <EmptyCells />
          </Row>
          <Row $h={20}>
            <RowHead>25</RowHead>
            <DataCell $dark />
            <DataCell $dark />
            <DataCell $dark />
            <DataCell $dark $edge />
            <EmptyCells />
          </Row>
        </tbody>
      </Grid>
    </GridPane>
    <VerticalBar>
      <ScrollButton aria-label="لأعلى">
        <Triangle dir="up" />
      </ScrollButton>
      <ScrollThumb $h={131} />
      <ScrollTrack />
      <ScrollButton aria-label="لأسفل">
        <Triangle dir="down" />
      </ScrollButton>
    </VerticalBar>
  </SheetArea>
);

const BottomTabs = () => (
  <SheetTabs>
    <TabArrows>
      <Triangle dir="right" color="#b1b1b1" />
      <Triangle dir="left" color={green} />
    </TabArrows>
    <SheetTab href="#" $w={67} $size={10} $active>
      مصروفات
    </SheetTab>
    <SheetTab href="#" $w={52} $size={11}>
      ورقة١
    </SheetTab>
    {sheetTabs.map(([name, width]) => (
      <SheetTab key={name} href="#" $w={width}>
        {name}
      </SheetTab>
    ))}
    <SheetTab href="#" $w={58} $size={11}>
      الاجمالى
    </SheetTab>
    <SheetTab href="#" $w={46} $size={10} $last>
      التفصيل
    </SheetTab>
    <MoreTabs aria-label="مزيد من الأوراق">...</MoreTabs>
    <TabsEnd>
      <button aria-label="ورقة جديدة">
        <svg width="16" height="16" viewBox="0 0 16 16" fill="none" stroke="#797775">
          <circle cx="8" cy="8" r="7.4" />
          <path d="M8 4v8M4 8h8" strokeWidth="2" />
        </svg>
      </button>
      <svg width="2" height="11" fill="#a19f9d">
        <path d="M0 0h2v2H0zM0 4h2v2H0zM0 8h2v2H0z" />
      </svg>
      <HorizontalBar>
        <ScrollButton aria-label="يسار">
          <Triangle dir="left" />
        </ScrollButton>
        <ScrollThumb $w={183} />
        <ScrollTrack />
        <ScrollButton aria-label="يمين">
          <Triangle dir="right" />
        </ScrollButton>
      </HorizontalBar>
    </TabsEnd>
  </SheetTabs>
);

const Status = () => (
  <StatusBar>
    <span>جاهز</span>
    <StatusText>
      <svg width="15" height="15" viewBox="0 0 15 15" fill="none" stroke="#605e5c" strokeWidth="1.1">
        <circle cx="6.500" cy="2.200" r="1.6" />
        <path d="M6.500 5L2 3.500 1 5l3.500 1.500v3L2.500 13l1.500 1 2.500-4M6.500 5L11 3.500l1 1.500-3.500 1.500v1.500M8 9l5.500 5M13.500 9L8 14" />
      </svg>
      إمكانية الوصول لذوي الاحتياجات الخاصة: اطلع على توصيات
    </StatusText>
    <StatusTools>
      <ViewButton $on aria-label="عادي">
        <svg width="14" height="13" viewBox="0 0 14 13" fill="none" stroke={ink}>
          <path d="M.5.5h12v12H.5zM4.500 0v13M8.500 0v13M0 4.500h13M0 8.500h13" />
        </svg>
      </ViewButton>
      <ViewButton aria-label="تخطيط الصفحة">
        <svg width="14" height="13" viewBox="0 0 14 13" fill="none" stroke={ink}>
          <path d="M.5.5h13v12H.5zM3.500 2.500h7v8h-7zM5 4.500h4M5 6.500h4M5 8.500h4" />
        </svg>
      </ViewButton>
      <ViewButton aria-label="معاينة فواصل الصفحات">
        <svg width="14" height="13" viewBox="0 0 14 13" fill="none" stroke={ink}>
          <path d="M.5.5h13v12H.5zM4.500 0v7.500h5V0M0 7.500h5" />
        </svg>
      </ViewButton>
      <ZoomButton $w={19}>−</ZoomButton>
      <ZoomSlider type="range" min="0" max="100" defaultValue="54" aria-label="تكبير/تصغير" />
      <ZoomButton $w={14}>+</ZoomButton>
      <ZoomValue>120%</ZoomValue>
    </StatusTools>
  </StatusBar>
);

const WindowsTaskbar = () => (
  <Taskbar>
    <TaskButton $w={48} aria-label="Start">
      <svg width="16" height="16" viewBox="0 0 16 16" fill="#fff">
        <path d="M0 2.300L7 1.300v6.200H0zM8 1.200L16 0v7.500H8zM0 8.500h7v6.200l-7-1zM8 8.500h8V16l-8-1.200z" />
      </svg>
    </TaskButton>
    <TaskSearch>
      <Magnifier size={16} />
      <input type="search" placeholder="Type here to search" aria-label="Type here to search" />
      <SquirrelIcon />
    </TaskSearch>
    <TaskButtons>
      <TaskButton aria-label="Task View">
        <svg width="16" height="16" viewBox="0 0 16 16" fill="none" stroke="#fff">
          <path d="M.5 0v3.500h10V0M.5 5.500h10v5H.5zM.5 16v-3.500h10V16M14 0v4M14 8v8" />
          <path d="M12.500 5h3v3h-3z" fill="#fff" stroke="none" />
        </svg>
      </TaskButton>
      <TaskButton $open aria-label="File Explorer">
        <ExplorerIcon />
      </TaskButton>
      <TaskButton aria-label="Edge">
        <EdgeIcon />
      </TaskButton>
      <TaskButton aria-label="Store">
        <StoreIcon />
      </TaskButton>
      <TaskButton aria-label="Mail">
        <svg width="24" height="20" viewBox="0 0 24 20">
          <path d="M0 7L12 0l12 7v12H0z" fill="#fff" />
          <path d="M2 7h20l-8 4.500 3 3.500z" fill="#203341" />
        </svg>
      </TaskButton>
      <TaskButton $open aria-label="Chrome">
        <ChromeIcon />
      </TaskButton>
      <TaskButton aria-label="Calculator">
        <CalculatorIcon />
      </TaskButton>
      <TaskButton $open aria-label="Word">
        <OfficeIcon word />
      </TaskButton>
      <TaskButton $on $open aria-label="Excel">
        <OfficeIcon />
      </TaskButton>
    </TaskButtons>
    <Tray>
      <Weather>
        <WeatherIcon />
        <span>28°C</span>
        <span>غائم جزئيًا</span>
      </Weather>
      <TrayButton aria-label="Show hidden icons">
        <svg width="12" height="8" viewBox="0 0 12 8" fill="none" stroke="#fff" strokeWidth="1.3">
          <path d="M.8 7L6 1.500 11.200 7" />
        </svg>
      </TrayButton>
      <TrayButton aria-label="Meet Now">
        <svg width="12" height="16" viewBox="0 0 12 16" fill="none" stroke="#fff">
          <path d="M2 2.500C4 .5 8 .5 10 2.500M2 13.500c2 2 6 2 8 0M.5 4.500h7v7h-7zM7.500 7l3.500-2v6L7.500 9" />
        </svg>
      </TrayButton>
      <TrayButton aria-label="Battery">
        <svg width="16" height="12" viewBox="0 0 16 12" fill="none" stroke="#fff">
          <path d="M5 3.500h9.500v7h-10V8M14.500 5.500h1.500v3h-1.500M1.500 0v2M4.500 0v2M.5 2.500h5V5l-1.500 1.500H2L.5 5zM3 6.500V9" />
          <path d="M7 5h6v4H7z" fill="#fff" />
        </svg>
      </TrayButton>
      <TrayButton aria-label="Network">
        <svg width="14" height="14" viewBox="0 0 14 14" fill="none" stroke="#fff">
          <path d="M.5 12.500A12 12 0 0 1 12.500.8M3.500 13A9 9 0 0 1 13 4M6.500 13.500A6 6 0 0 1 13 7.500M9.500 13.500a3 3 0 0 1 3.500-3" />
          <circle cx="12.500" cy="13" r="1" fill="#fff" />
        </svg>
      </TrayButton>
      <TrayButton aria-label="Volume">
        <svg width="17" height="14" viewBox="0 0 17 14" fill="none" stroke="#fff">
          <path d="M.5 4.500H3l3.500-3v11L3 9.500H.5zM9 5c1 1 1 3 0 4M11.500 3c2 2.500 2 5.500 0 8M14 1c3 3.500 3 8.500 0 12" />
        </svg>
      </TrayButton>
      <Clock>
        <div>08:17 م</div>
        <div>٢٠٢٣/٠٨/١٩</div>
      </Clock>
      <TrayButton $w={54} aria-label="Notifications">
        <svg width="26" height="26" viewBox="0 0 26 26">
          <path d="M1 2h16v13H9l-4 4v-4H1z" fill="#fff" />
          <path d="M4 5.500h10M4 8.500h10M4 11.500h6" stroke="#1b2a3e" />
          <circle cx="17" cy="17" r="7.5" fill="#39444f" stroke="#9aa1a8" />
          <text x="17" y="21" textAnchor="middle" fontSize="12" fill="#fff" fontFamily="DejaVu Sans, sans-serif">
            ٢
          </text>
        </svg>
      </TrayButton>
    </Tray>
  </Taskbar>
);

const App = () => {
  return (
    <>
      <GlobalStyle />
      <Window dir="rtl">
        <Title />
        <Tabs />
        <HomeRibbon />
        <Sheet />
        <BottomTabs />
        <Status />
        <WindowsTaskbar />
      </Window>
      <Watermark>
        <p>مستقل</p>
        <small>mostaql.com</small>
      </Watermark>
    </>
  );
};

export default App;
